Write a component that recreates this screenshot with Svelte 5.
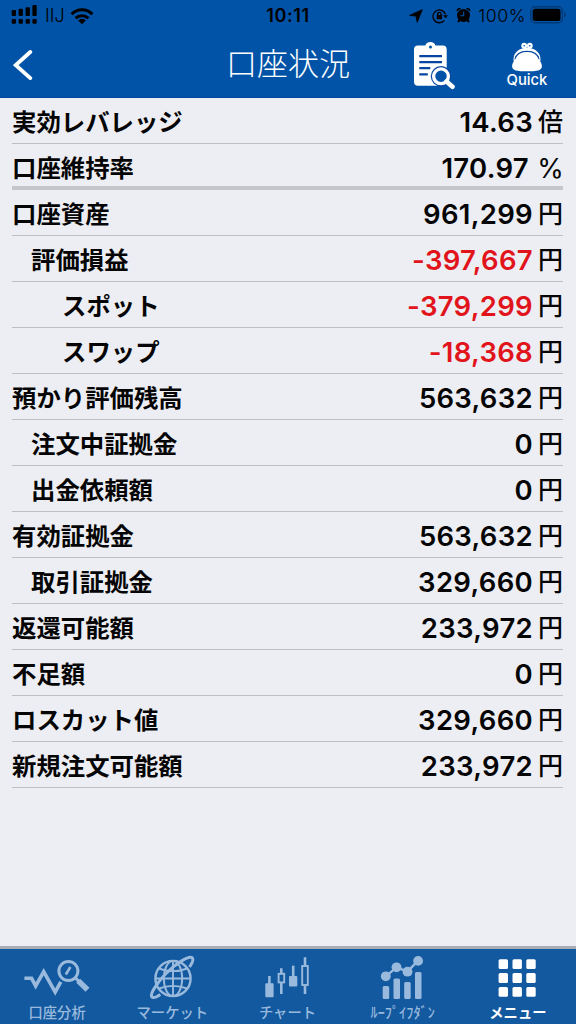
<script>
  const rows = [
    { label: '実効レバレッジ', value: '14.63', unit: '倍' },
    { label: '口座維持率', value: '170.97', unit: '%', section: true },
    { label: '口座資産', value: '961,299', unit: '円' },
    { label: '評価損益', value: '-397,667', unit: '円', level: 1 },
    { label: 'スポット', value: '-379,299', unit: '円', level: 2 },
    { label: 'スワップ', value: '-18,368', unit: '円', level: 2 },
    { label: '預かり評価残高', value: '563,632', unit: '円' },
    { label: '注文中証拠金', value: '0', unit: '円', level: 1 },
    { label: '出金依頼額', value: '0', unit: '円', level: 1 },
    { label: '有効証拠金', value: '563,632', unit: '円' },
    { label: '取引証拠金', value: '329,660', unit: '円', level: 1 },
    { label: '返還可能額', value: '233,972', unit: '円' },
    { label: '不足額', value: '0', unit: '円' },
    { label: 'ロスカット値', value: '329,660', unit: '円' },
    { label: '新規注文可能額', value: '233,972', unit: '円' }
  ];
  const grid = [16.6, 30.5, 44.3].flatMap((x) => [5.3, 19.1, 33].map((y) => ({ x, y })));
</script>

<div class="screen">
  <header>
    <div class="status">
      <div class="left">
        <svg width="26" height="20" viewBox="0 0 26 20">
          <rect x="0.7" y="5" width="4.3" height="6" rx="1" /><rect x="7.6" y="3.8" width="4.3" height="7.2" rx="1" />
          <rect x="14.6" y="2.2" width="4.3" height="8.8" rx="1" /><rect x="21.4" y="0" width="4.3" height="11" rx="1" />
          <rect x="0.7" y="14" width="4.3" height="4.7" rx="1" /><rect x="7.6" y="14" width="4.3" height="4.7" rx="1" />
          <rect x="14.6" y="14" width="4.3" height="4.7" rx="1" /><rect x="21.4" y="14" width="4.3" height="4.7" rx="1" />
        </svg>
        <span class="carrier">IIJ</span>
        <svg class="wifi" width="24" height="17" viewBox="0 0 24 17">
          <g fill="none" stroke="#000" stroke-width="3"><path d="M1.6 6.2C7.4.4 16.6.4 22.4 6.2" /><path d="M5.6 10.2C9.2 6.8 14.8 6.8 18.4 10.2" /></g>
          <path d="M12 16.2l-3.8-3.8c2.2-1.8 5.4-1.8 7.6 0z" />
        </svg>
      </div>
      <span class="clock">10:11</span>
      <div class="right">
        <svg width="14" height="14" viewBox="0 0 14 14"><path d="M13.3.6L8.2 13.3 7 7.1.6 6.4z" stroke="#000" stroke-width=".8" stroke-linejoin="round" /></svg>
        <svg class="lock" width="16" height="16" viewBox="0 0 16 16">
          <g fill="none" stroke="#000" stroke-width="1.3"><path d="M13.5 6.5A6.4 6.4 0 1 0 12.4 12.3" /><path d="M5.7 7.5V6a1.7 1.7 0 0 1 3.4 0v1.5" /></g>
          <rect x="4.7" y="7" width="5.4" height="4.3" rx=".6" /><path d="M11 7.2h5l-2.4 3z" />
        </svg>
        <svg class="alarm" width="15" height="16" viewBox="0 0 15 16">
          <circle cx="7.5" cy="8.4" r="6.5" /><path d="M.5 4.5C.4 1.5 2.8.4 5 1.5zM14.5 4.5c.1-3-2.3-4.1-4.5-3zM2.5 12l-1.2 2.8 1.2.6 2.4-1.6zM12.5 12l1.2 2.8-1.2.6-2.4-1.6z" />
          <path d="M7.7 4.6v4.2H4.3" fill="none" stroke="#0053a6" stroke-width="1.1" />
        </svg>
        <span class="percent">100%</span>
        <svg class="battery" width="37" height="18" viewBox="0 0 37 18">
          <rect x=".8" y=".8" width="31.6" height="16" rx="4.4" fill="none" stroke="#003a78" stroke-width="1.4" />
          <rect x="2.7" y="2.7" width="27.8" height="12.2" rx="2.5" /><path d="M34 6c2.4.9 2.4 4.7 0 5.6z" fill="#003a78" />
        </svg>
      </div>
    </div>
    <div class="nav">
      <svg class="back" width="20" height="30" viewBox="0 0 20 30"><path d="M17.3 2L2.8 15.1l14.5 13" fill="none" stroke="#fff" stroke-width="3.8" stroke-linecap="round" stroke-linejoin="miter" /></svg>
      <h1>口座状況</h1>
      <div class="actions">
        <svg width="44" height="50" viewBox="0 0 44 50">
          <path fill="#fff" d="M6 5.4h7.4C13.8 3.3 15.8 2 18.4 2s4.6 1.3 5 3.4h7.3a4 4 0 0 1 4 4v32.3a4 4 0 0 1-4 4H6a4 4 0 0 1-4-4V9.4a4 4 0 0 1 4-4z" />
          <circle cx="18.5" cy="6.9" r="1.5" fill="#0053a6" />
          <path d="M7.3 16.2H30M7.3 22.2H30M7.3 28.2h11M7.3 34.4h8.5" stroke="#0745a1" stroke-width="2.3" />
          <circle cx="29" cy="36.3" r="10.2" fill="#0745a1" /><path d="M35 42l6.7 5.7" stroke="#0053a6" stroke-width="6" />
          <circle cx="29" cy="36.3" r="7.4" fill="#0053a6" stroke="#fff" stroke-width="3.3" /><path d="M34.5 41.5l6 5.3" stroke="#fff" stroke-width="4.6" stroke-linecap="round" />
        </svg>
        <div class="quick">
          <svg width="32" height="32" viewBox="0 0 32 32">
            <path d="M2.6 20C1.6 12 8 6.7 16 6.7S30.4 12 29.4 20z" fill="#fff" />
            <path d="M4 18.5C5 13 9.5 10.3 16 10.3S27 13 28 18.5" fill="none" stroke="#0745a1" stroke-width="1.3" />
            <path d="M4.5 18C7 13.5 11 11.6 16 11.6s9 1.9 11.5 6.4c2.3 2.6 3.4 4.8 3.4 7.2C30.9 29.5 26 30.3 16 30.3S1.1 29.5 1.1 25.2C1.1 22.8 2.2 20.6 4.5 18z" fill="#fff" />
            <circle cx="13.2" cy="4.7" r="2.9" fill="#fff" /><circle cx="18.8" cy="4.7" r="2.9" fill="#fff" />
            <circle cx="13.2" cy="4.7" r=".8" fill="#0053a6" /><circle cx="18.8" cy="4.7" r=".8" fill="#0053a6" />
          </svg>
          <span>Quick</span>
        </div>
      </div>
    </div>
  </header>

  <main>
    {#each rows as row}
      <div class="row level{row.level ?? 0}" class:section={row.section}>
        <span class="label">{row.label}</span>
        <span class="value" class:negative={row.value.startsWith('-')}>{row.value}</span>
        <span class="unit">{row.unit}</span>
      </div>
    {/each}
  </main>

  <nav class="tabs">
    <div class="tab">
      <svg width="72" height="48" viewBox="0 0 72 48" fill="none" stroke="currentColor">
        <path d="M2.4 24.3h7.2l4.1 7.6 8-14.2 11.5 20.4 5.6-10.2" stroke-width="3.6" />
        <circle cx="46.4" cy="17" r="9.5" stroke-width="3" /><path d="M53.3 23.8l5 4.8" stroke-width="3" /><path d="M56.2 26.8l9.3 9" stroke-width="5.6" />
        <path d="M43.8 20.5l4.6-7.5" stroke-width="2.6" />
      </svg>
      <span>口座分析</span>
    </div>
    <div class="tab">
      <svg width="72" height="48" viewBox="0 0 72 48" fill="none" stroke="currentColor" stroke-width="1.9">
        <circle cx="36" cy="24.5" r="17.6" stroke-width="2.4" /><ellipse cx="36" cy="24.5" rx="9.2" ry="17.6" />
        <path d="M36 7v35M18.5 24.5h35M22 14.5c8.4 3.5 19.6 3.5 28 0M22 34.5c8.4-3.5 19.6-3.5 28 0" />
        <path d="M23.3 40.5C18.5 43.7 15.8 44 14.8 42.8 12.8 40 19.5 29.5 29 19.5 39.5 8.800 52.500 1 55.300 3.900 56.500 5.200 55.500 8.500 52.500 13" stroke-width="3" />
      </svg>
      <span>マーケット</span>
    </div>
    <div class="tab">
      <svg width="72" height="48" viewBox="0 0 72 48" fill="none" stroke="currentColor" stroke-width="2.6">
        <rect x="13.3" y="29.3" width="8.3" height="14" rx="1" fill="currentColor" stroke="none" /><path d="M17.4 22v9" />
        <rect x="26.6" y="19.8" width="5.6" height="8.6" stroke-width="1.9" /><path d="M29.3 14.3v5M29.3 29v11" />
        <rect x="37" y="22" width="8.3" height="10.5" rx="1" fill="currentColor" stroke="none" /><path d="M41.2 11.7v12" />
        <rect x="50.2" y="12" width="5.6" height="19" stroke-width="1.9" /><path d="M53 3.3V12M53 32v8" />
      </svg>
      <span>チャート</span>
    </div>
    <div class="tab">
      <svg width="72" height="48" viewBox="0 0 72 48" fill="currentColor">
        <path d="M18.8 22.3l10.7-9 11 4.400 10.600-11" fill="none" stroke="currentColor" stroke-width="2.4" />
        <circle cx="18.8" cy="22.3" r="4.9" /><circle cx="29.5" cy="13.3" r="4.9" /><circle cx="40.5" cy="17.7" r="4.9" /><circle cx="51.1" cy="6.9" r="4.9" />
        <rect x="15.7" y="32" width="6.5" height="13" rx="1.5" /><rect x="26.5" y="24.6" width="6.5" height="20.4" rx="1.5" /><rect x="37.2" y="28" width="6.5" height="17" rx="1.5" /><rect x="48" y="18" width="6.5" height="27" rx="1.5" />
      </svg>
      <span>ﾙｰﾌﾟｲﾌﾀﾞﾝ</span>
    </div>
    <div class="tab active">
      <svg width="72" height="48" viewBox="0 0 72 48" fill="currentColor">
        {#each grid as cell}<rect x={cell.x} y={cell.y} width="9.4" height="9.8" rx="1.5" />{/each}
      </svg>
      <span>メニュー</span>
    </div>
  </nav>
</div>

<style>
  :global(body) { margin: 0; }
  .screen { width: 576px; height: 1024px; display: flex; flex-direction: column; overflow: hidden; background: #edeef3; color: #050505; font-family: Inter, "Noto Sans CJK JP", sans-serif; }
  svg { display: block; flex: none; }
  header { height: 98px; box-sizing: border-box; background: #0053a6; border-bottom: 1px solid #06439a; flex: none; }
  .status { height: 32px; display: grid; grid-template-columns: 1fr auto 1fr; align-items: center; padding: 0 9px 0 11px; color: #000; line-height: 32px; }
  .left, .right { display: flex; align-items: center; }
  .left svg:first-child { margin-top: -3px; }
  .carrier { font-size: 18px; font-weight: 300; margin-left: 8px; width: 19px; }
  .wifi { margin-left: 6px; }
  .clock { font-size: 18px; font-weight: 600; letter-spacing: 0.6px; margin-right: 2px; }
  .right { justify-content: flex-end; }
  .lock { margin-left: 9px; }
  .alarm { margin-left: 8px; margin-top: -2px; }
  .percent { font-size: 17.8px; font-weight: 300; margin-left: 7px; letter-spacing: 0.5px; }
  .battery { margin-left: 4px; margin-top: -2px; }
  .nav { height: 65px; display: grid; grid-template-columns: 1fr auto 1fr; align-items: center; color: #fff; }
  .back { margin-left: 13px; margin-top: -2px; }
  h1 { margin: 0; font: 300 31px/60px "Noto Sans CJK JP", sans-serif; padding: 0 0 8px 0; }
  .actions { display: flex; justify-content: flex-end; padding: 0 27px 3px 0; }
  .quick { width: 44px; display: flex; flex-direction: column; align-items: center; margin-left: 49px; padding-top: 1px; }
  .quick span { font-size: 14.8px; line-height: 15px; font-weight: 500; }
  main { flex: 1; padding: 0 13px 0 12px; }
  .row { height: 46px; box-sizing: border-box; display: flex; align-items: flex-start; border-bottom: 1px solid #bebfc4; }
  .row.section { border-bottom: 4px solid #c5c6cb; }
  .label { flex: 1; font: 700 24.4px/46px "Noto Sans CJK JP", sans-serif; }
  .level1 .label { padding-left: 19px; }
  .level2 .label { padding-left: 50px; }
  .value { font-size: 27.5px; font-weight: 600; line-height: 49px; letter-spacing: 0.3px; }
  .negative { color: #e1141c; }
  .unit { font: 500 25px/45px "Noto Sans CJK JP", sans-serif; width: 25px; margin-left: 5px; text-align: center; }
  .section .value { margin-right: 4px; }
  .section .unit { font: 400 27px/49px Inter, sans-serif; display: flex; justify-content: center; }
  .tabs { height: 78px; box-sizing: border-box; flex: none; display: grid; grid-template-columns: repeat(5, 1fr); background: #1359a0; border-top: 3px solid #a9adb5; color: #99badd; }
  .tab { display: flex; flex-direction: column; align-items: center; padding-top: 5px; }
  .tab span { font: 500 14.3px/20px "Noto Sans CJK JP", sans-serif; white-space: nowrap; padding-right: 1px; }
  .active { color: #fff; }
  .tab.active span { font-weight: 700; }
</style>
